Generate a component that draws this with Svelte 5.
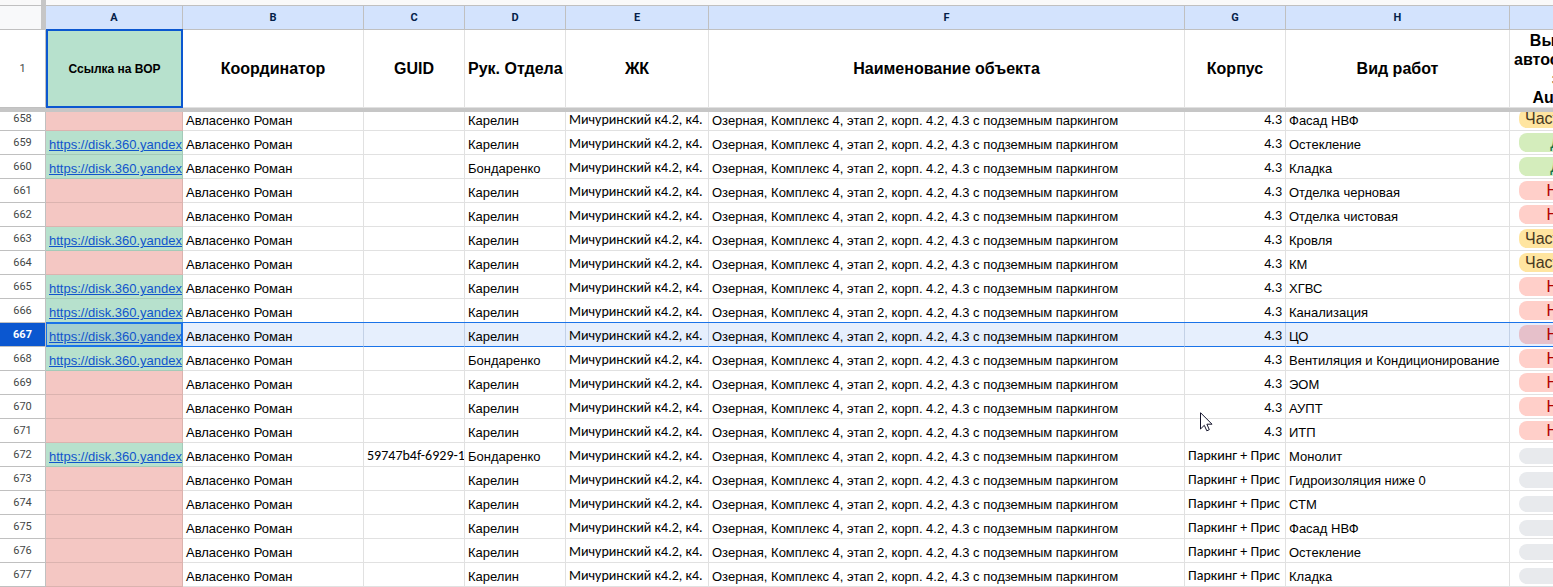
<script>
  const letters = ['A', 'B', 'C', 'D', 'E', 'F', 'G', 'H', ''];
  const widths = [46, 137, 181, 101, 101, 143, 476, 101, 224, 101];
  const titles = ['Координатор', 'GUID', 'Рук. Отдела', 'ЖК', 'Наименование объекта', 'Корпус', 'Вид работ'];
  const link = 'https://disk.360.yandex.ru/';
  const object = 'Озерная, Комплекс 4, этап 2, корп. 4.2, 4.3 с подземным паркингом';
  const parking = 'Паркинг + Прис';
  const K = 'Карелин';
  const B = 'Бондаренко';

  const rows = [
    [658, false, K, '4.3', 'Фасад НВФ', 'part'],
    [659, true, K, '4.3', 'Остекление', 'yes'],
    [660, true, B, '4.3', 'Кладка', 'yes'],
    [661, false, K, '4.3', 'Отделка черновая', 'no'],
    [662, false, K, '4.3', 'Отделка чистовая', 'no'],
    [663, true, K, '4.3', 'Кровля', 'part'],
    [664, false, K, '4.3', 'КМ', 'part'],
    [665, true, K, '4.3', 'ХГВС', 'no'],
    [666, true, K, '4.3', 'Канализация', 'no'],
    [667, true, K, '4.3', 'ЦО', 'no'],
    [668, true, B, '4.3', 'Вентиляция и Кондиционирование', 'no'],
    [669, false, K, '4.3', 'ЭОМ', 'no'],
    [670, false, K, '4.3', 'АУПТ', 'no'],
    [671, false, K, '4.3', 'ИТП', 'no'],
    [672, true, B, parking, 'Монолит', 'none', '59747b4f-6929-1'],
    [673, false, K, parking, 'Гидроизоляция ниже 0', 'none'],
    [674, false, K, parking, 'СТМ', 'none'],
    [675, false, K, parking, 'Фасад НВФ', 'none'],
    [676, false, K, parking, 'Остекление', 'none'],
    [677, false, K, parking, 'Кладка', 'none']
  ].map(([n, linked, head, block, work, state, guid = '']) => ({ n, linked, head, block, work, state, guid }));

  const labels = { part: 'Частично', yes: 'Да', no: 'Нет', none: '' };
  const selected = 667;
</script>

{#snippet columns()}
  <colgroup>
    {#each widths as w}<col style="width: {w}px" />{/each}
  </colgroup>
{/snippet}

<main class="sheet">
  <div class="edge"><span class="grip"></span></div>
  <table class="frozen">
    {@render columns()}
    <thead>
      <tr class="letters">
        <td class="corner"></td>
        {#each letters as l}<th scope="col">{l}</th>{/each}
      </tr>
    </thead>
    <tbody>
      <tr class="titles">
        <th class="num" scope="row">1</th>
        <td class="active">Ссылка на ВОР</td>
        {#each titles as t}<td>{t}</td>{/each}
        <td class="wrap">Выпуск<br />автосводки<br />за<br />August</td>
      </tr>
    </tbody>
  </table>
  <div class="freeze"></div>
  <div class="scroller">
    <table class="body">
      {@render columns()}
      <tbody>
        {#each rows as r}
          <tr class:selected={r.n === selected}>
            <th class="num" scope="row">{r.n}</th>
            <td class={r.linked ? 'link green' : 'link red'}>{#if r.linked}<a href={link}>{link}</a>{/if}</td>
            <td>Авласенко Роман</td>
            <td class="alt">{r.guid}</td>
            <td>{r.head}</td>
            <td class="alt">Мичуринский к4.2, к4.</td>
            <td>{object}</td>
            <td class="alt" class:right={r.block === '4.3'}>{r.block}</td>
            <td>{r.work}</td>
            <td class="state"><span class="chip {r.state}">{labels[r.state]}</span></td>
          </tr>
        {/each}
      </tbody>
    </table>
  </div>
  <svg class="pointer" width="13" height="20" viewBox="0 0 13 20" aria-hidden="true">
    <path d="M.5 .7V17L4.3 13.3L6.8 18.8L9.3 17.7L6.9 12.2H12Z" fill="#fff" stroke="#14142b" />
  </svg>
</main>

<style>
  :global(body) {
    margin: 0;
    background: #fff;
  }
  .sheet {
    position: relative;
    overflow: hidden;
    font-family: 'Liberation Sans', Arial, sans-serif;
    font-size: 13px;
    color: #000;
  }
  .edge {
    height: 5px;
    background: #f9f9f9;
    padding-left: 41px;
  }
  .grip {
    display: block;
    width: 5px;
    height: 5px;
    background: #c6c6c6;
  }
  table {
    width: 1611px;
    table-layout: fixed;
    border-collapse: separate;
    border-spacing: 0;
  }
  th,
  td {
    box-sizing: border-box;
    padding: 0 3px;
    border-right: 1px solid #e1e1e1;
    border-bottom: 1px solid #e1e1e1;
    overflow: hidden;
    white-space: nowrap;
    text-align: left;
  }
  .letters > * {
    height: 25px;
    padding: 0;
    border-top: 1px solid #c0c0c0;
    border-color: #c0c0c0;
    background: #d3e3fd;
    color: #041e49;
    font-family: Roboto, sans-serif;
    font-size: 11px;
    text-align: center;
  }
  .letters .corner {
    background: #f8f9fa;
    border-right: 5px solid #c6c6c6;
  }
  .num {
    padding: 0;
    border-color: #c0c0c0;
    color: #444746;
    font-family: Roboto, sans-serif;
    font-size: 11px;
    font-weight: 400;
    text-align: center;
  }
  .titles > * {
    height: 78px;
    text-align: center;
  }
  .titles td {
    font-size: 16px;
    font-weight: 700;
  }
  .titles .active {
    border: 2px solid #0b57d0;
    border-top-width: 1px;
    box-shadow: 0 -1px #0b57d0;
    background: #b7e1cd;
    font-size: 12px;
  }
  .titles .wrap {
    padding-top: 1px;
    line-height: 19px;
  }
  .freeze {
    height: 4px;
    background: #c6c6c6;
  }
  .scroller {
    overflow: hidden;
  }
  .body {
    margin-top: -5px;
  }
  .body tr > * {
    height: 24px;
    line-height: 15px;
    padding-top: 4px;
  }
  .body .num {
    padding: 0;
  }
  .body .alt {
    padding-top: 2px;
    font-family: Carlito, Calibri, 'Open Sans', sans-serif;
    font-size: 14px;
  }
  .body .right {
    text-align: right;
  }
  .green {
    background: #b7e1cd;
    border-color: #a4cab8;
  }
  .red {
    background: #f4c7c3;
    border-color: #dbb3af;
  }
  a {
    color: #1155cc;
  }
  .body .state {
    padding: 0 9px;
  }
  .chip {
    display: block;
    height: 19px;
    border-radius: 8px;
    font-size: 16px;
    line-height: 19px;
    text-align: center;
  }
  .part {
    background: #ffe5a0;
    color: #473821;
  }
  .yes {
    background: #d4edbc;
    color: #11734b;
  }
  .no {
    background: #ffcfc9;
    color: #b10202;
  }
  .none {
    height: 16px;
    margin-top: 2px;
    background: #e8eaed;
  }
  .selected td {
    background: #e6effd;
    border-right-color: #c3d1e6;
    border-bottom-color: #1a73e8;
    box-shadow: 0 -1px #1a73e8;
  }
  .selected .num {
    background: #0b57d0;
    color: #fff;
    font-weight: 700;
  }
  .selected .link {
    background: #a4cfcf;
    border-right-color: #1a73e8;
    box-shadow: 0 -1px #1a73e8, inset 0 0 0 1px #1a73e8;
  }
  .selected .no {
    background: #e6c0ca;
  }
  .pointer {
    position: absolute;
    left: 1200px;
    top: 412px;
  }
</style>
